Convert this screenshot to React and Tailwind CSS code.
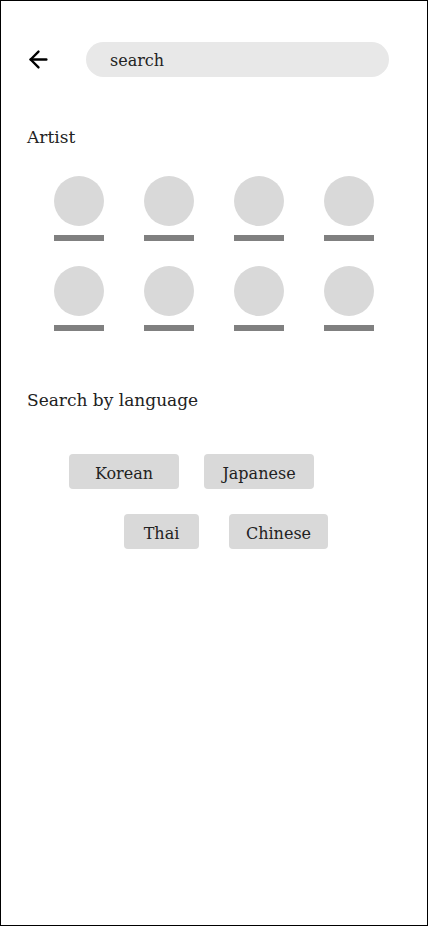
import { ArrowLeft } from "lucide-react";

const artists = [1, 2, 3, 4, 5, 6, 7, 8];

const ArtistItem = () => (
  <div className="flex flex-col items-center w-[50px]">
    <div className="w-[50px] h-[50px] rounded-full bg-[#d9d9d9]" />
    <div className="w-[50px] h-[6px] mt-[9px] bg-[#808080]" />
  </div>
);

const LangButton = ({ label, width }) => (
  <button className={`h-[35px] pt-[4px] rounded-[4px] bg-[#d9d9d9] text-[16px] text-[#222] ${width}`}>
    {label}
  </button>
);

export default function App() {
  return (
    <div className="w-[428px] h-[926px] bg-white border border-black font-['DejaVu_Serif',serif] text-[#222]">
      {/* Header */}
      <div className="flex items-center pt-[41px] pl-[24px]">
        <ArrowLeft size={27} strokeWidth={2.1} className="text-black" />
        <div className="ml-[34px] w-[303px] h-[35px] rounded-full bg-[#e8e8e8] flex items-center pl-[24px] pt-[2px] text-[16px]">
          search
        </div>
      </div>

      {/* Artist */}
      <h2 className="mt-[48px] ml-[26px] text-[17px] leading-[24px]">Artist</h2>

      <div className="mt-[27px] ml-[53px] grid grid-cols-[repeat(4,50px)] gap-x-[40px] gap-y-[25px]">
        {artists.map((a) => (
          <ArtistItem key={a} />
        ))}
      </div>

      {/* Language */}
      <h2 className="mt-[57px] ml-[26px] text-[17px] leading-[24px]">Search by language</h2>

      <div className="mt-[42px] flex gap-[25px] pl-[68px]">
        <LangButton label="Korean" width="w-[110px]" />
        <LangButton label="Japanese" width="w-[110px]" />
      </div>
      <div className="mt-[25px] flex gap-[30px] pl-[123px]">
        <LangButton label="Thai" width="w-[75px]" />
        <LangButton label="Chinese" width="w-[99px]" />
      </div>
    </div>
  );
}
